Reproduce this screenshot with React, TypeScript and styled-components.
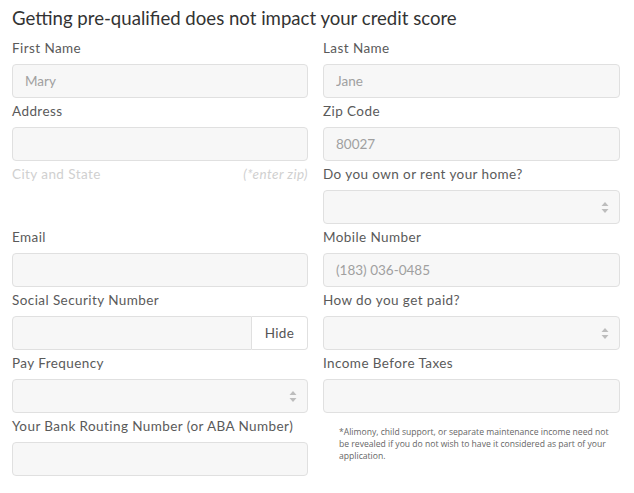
import React from "react";
import styled, { createGlobalStyle } from "styled-components";

const Global = createGlobalStyle`
  html, body { margin: 0; padding: 0; background: #fff; }
  body { font-family: Lato, "Open Sans", sans-serif; }
  * { box-sizing: border-box; }
`;

const Page = styled.div`
  padding: 5px 14px 0 12px;
  width: 634px;
`;

const Heading = styled.h1`
  margin: 0 0 7px;
  font-size: 18.6px;
  line-height: 26px;
  font-weight: 400;
  color: #333;
`;

const Grid = styled.div`
  display: grid;
  grid-template-columns: 296px 297px;
  column-gap: 15px;
  row-gap: 3px;
`;

const Field = styled.div`
  display: flex;
  flex-direction: column;
`;

const LabelRow = styled.div`
  display: flex;
  justify-content: space-between;
  margin-bottom: 6px;
`;

const Label = styled.label<{ $muted?: boolean }>`
  font-size: 13.5px;
  line-height: 20px;
  letter-spacing: 0.42px;
  color: ${(p) => (p.$muted ? "#d0d0d0" : "#5a5a5a")};
`;

const Hint = styled.span`
  font-size: 13.5px;
  line-height: 20px;
  letter-spacing: 0.42px;
  font-style: italic;
  color: #d0d0d0;
`;

const Input = styled.input<{ $grouped?: boolean }>`
  display: block;
  width: 100%;
  height: 34px;
  padding: 0 12px;
  border: 1px solid #e0e0e0;
  border-radius: ${(p) => (p.$grouped ? "4px 0 0 4px" : "4px")};
  background: #f7f7f7;
  font-family: Lato, sans-serif;
  font-size: 13.5px;
  color: #555;
  outline: none;
  &::placeholder { color: #a0a0a0; }
`;

const Group = styled.div`
  display: flex;
`;

const GroupButton = styled.button`
  flex: 0 0 56px;
  height: 34px;
  border: 1px solid #e0e0e0;
  border-left: none;
  border-radius: 0 4px 4px 0;
  background: #fff;
  font-family: Lato, sans-serif;
  font-size: 13.5px;
  letter-spacing: 0.3px;
  color: #555;
  padding: 0;
`;

const SelectWrap = styled.div`
  position: relative;
`;

const Select = styled.select`
  display: block;
  width: 100%;
  height: 34px;
  appearance: none;
  -webkit-appearance: none;
  border: 1px solid #e0e0e0;
  border-radius: 4px;
  background: #f7f7f7;
  font-family: Lato, sans-serif;
  font-size: 13.5px;
  color: #555;
  padding: 0 12px;
  outline: none;
`;

const Arrows = styled.svg`
  position: absolute;
  right: 11px;
  top: 12px;
  pointer-events: none;
`;

const Note = styled.p`
  margin: 0;
  padding: 10px 8px 0 16px;
  font-family: "Open Sans", sans-serif;
  font-size: 8.6px;
  line-height: 12px;
  color: #666;
`;

const SelectBox = () => (
  <SelectWrap>
    <Select defaultValue="">
      <option value="" />
    </Select>
    <Arrows width="8" height="11" viewBox="0 0 8 11">
      <path d="M4 0 L7.5 4 L0.5 4 Z" fill="#bdbdbd" />
      <path d="M4 11 L7.5 7 L0.5 7 Z" fill="#bdbdbd" />
    </Arrows>
  </SelectWrap>
);

export default function App() {
  return (
    <Page>
      <Global />
      <Heading>Getting pre-qualified does not impact your credit score</Heading>
      <Grid>
        <Field>
          <LabelRow><Label>First Name</Label></LabelRow>
          <Input placeholder="Mary" />
        </Field>
        <Field>
          <LabelRow><Label>Last Name</Label></LabelRow>
          <Input placeholder="Jane" />
        </Field>

        <Field>
          <LabelRow><Label>Address</Label></LabelRow>
          <Input />
        </Field>
        <Field>
          <LabelRow><Label>Zip Code</Label></LabelRow>
          <Input placeholder="80027" />
        </Field>

        <Field>
          <LabelRow>
            <Label $muted>City and State</Label>
            <Hint>(*enter zip)</Hint>
          </LabelRow>
        </Field>
        <Field>
          <LabelRow><Label>Do you own or rent your home?</Label></LabelRow>
          <SelectBox />
        </Field>

        <Field>
          <LabelRow><Label>Email</Label></LabelRow>
          <Input />
        </Field>
        <Field>
          <LabelRow><Label>Mobile Number</Label></LabelRow>
          <Input placeholder="(183) 036-0485" />
        </Field>

        <Field>
          <LabelRow><Label>Social Security Number</Label></LabelRow>
          <Group>
            <Input $grouped />
            <GroupButton>Hide</GroupButton>
          </Group>
        </Field>
        <Field>
          <LabelRow><Label>How do you get paid?</Label></LabelRow>
          <SelectBox />
        </Field>

        <Field>
          <LabelRow><Label>Pay Frequency</Label></LabelRow>
          <SelectBox />
        </Field>
        <Field>
          <LabelRow><Label>Income Before Taxes</Label></LabelRow>
          <Input />
        </Field>

        <Field>
          <LabelRow><Label>Your Bank Routing Number (or ABA Number)</Label></LabelRow>
          <Input />
        </Field>
        <Field>
          <Note>
            *Alimony, child support, or separate maintenance income need not be revealed if you do not wish to have it considered as part of your application.
          </Note>
        </Field>
      </Grid>
    </Page>
  );
}
